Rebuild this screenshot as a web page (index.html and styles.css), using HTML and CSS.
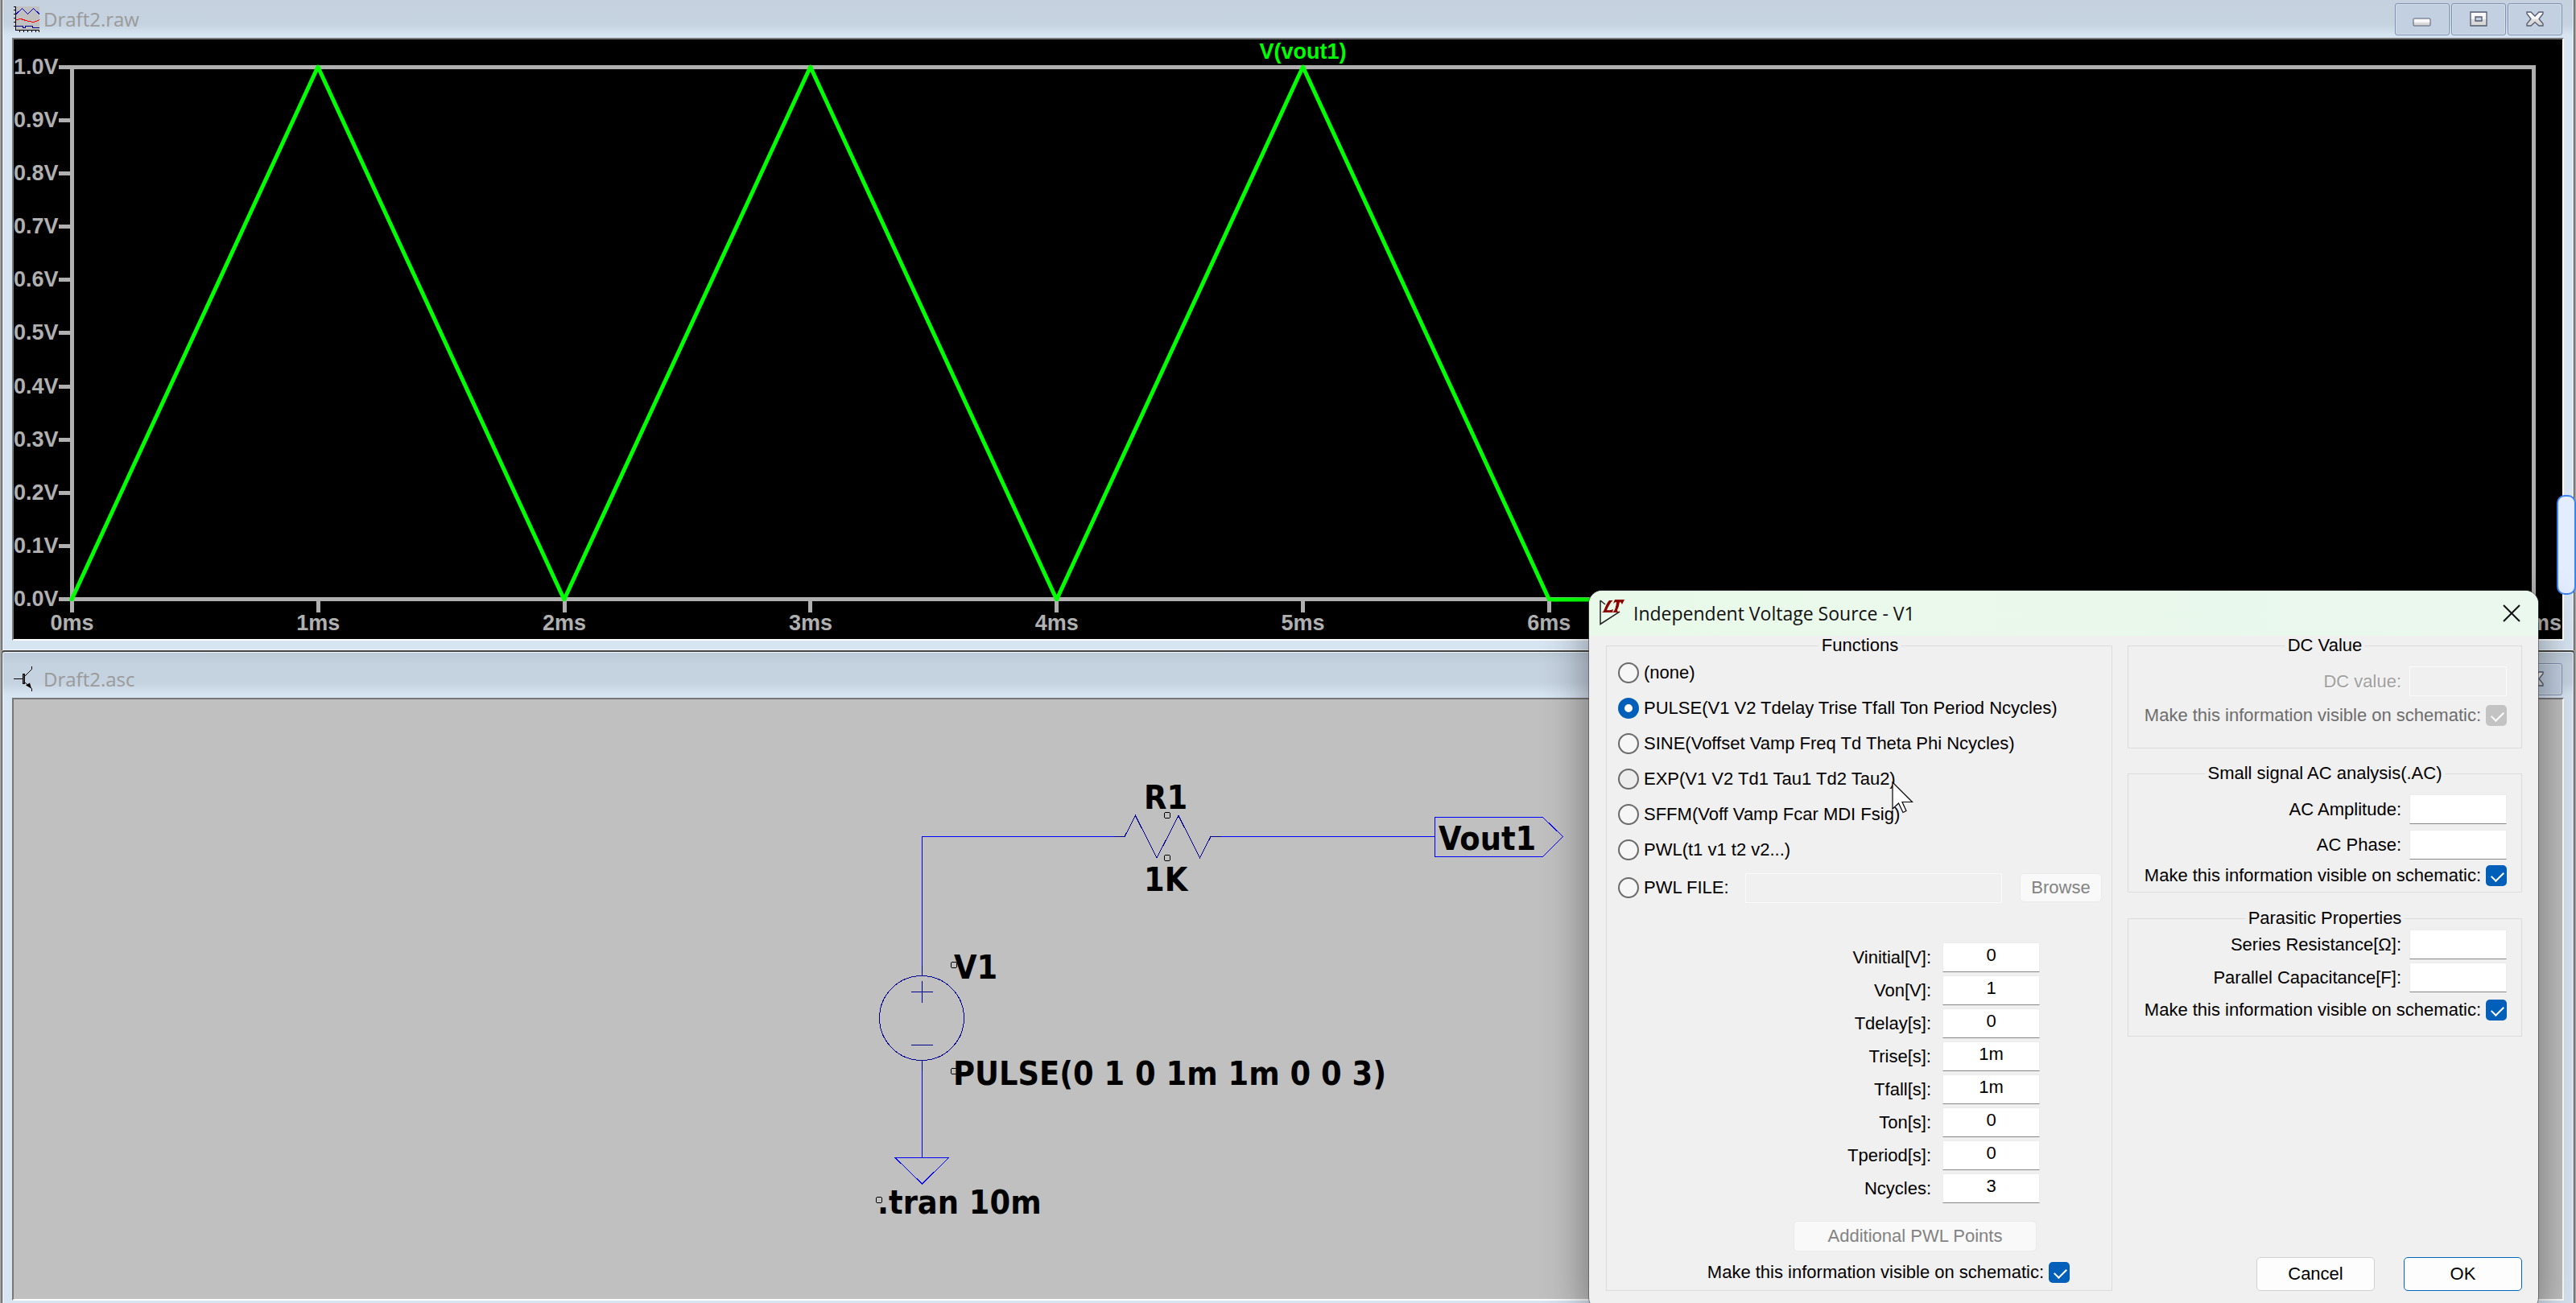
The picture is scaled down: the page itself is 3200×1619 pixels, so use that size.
FILE: index.html
```html
<!DOCTYPE html>
<html lang="en">
<head>
<meta charset="utf-8">
<title>LTspice - Draft2</title>
<link rel="stylesheet" href="styles.css">
</head>
<body>
<svg class="defs" aria-hidden="true">
  <defs>
    <linearGradient id="glyph" x1="0" y1="0" x2="0" y2="1">
      <stop offset="0" stop-color="#fff"/><stop offset=".5" stop-color="#f4f4f4"/><stop offset=".52" stop-color="#dcdcdc"/><stop offset="1" stop-color="#d6d6d6"/>
    </linearGradient>
  </defs>
</svg>

<main class="workspace">
  <section class="window">
    <header class="titlebar">
      <svg class="win-icon" viewBox="0 0 32 32" shape-rendering="crispEdges" aria-hidden="true">
        <rect x="3" width="29" height="29" fill="#c0c0c0"/>
        <path d="M2.5 0v30M2 29.5h30M0 .5h3M0 4.500h3M0 9.500h3M0 14.500h3M0 19.500h3M0 24.500h3M7.500 29v3M12.500 29v3M17.500 29v3M22.500 29v3M27.500 29v3M31.500 29v3" stroke="#000" fill="none"/>
        <path d="M3 9.500L10.500 2.500L17.500 9.500L24.500 2.500L32 9.500" stroke="#0000d0" fill="none"/>
        <path d="M3 16.500L9 15.500L15 17.500L24 19.500L28 18.500L32 16.500" stroke="#f00" fill="none"/>
        <path d="M3 24.500h8.500v2h3v-2h9v2h8.500" stroke="#000090" fill="none"/>
      </svg>
      <h1 class="win-title">Draft2.raw</h1>
      <div class="win-buttons">
        <button class="win-button" type="button" aria-label="Minimize"><svg width="24" height="20" viewBox="0 0 24 20"><rect x="1" y="9" width="21" height="9" rx="1" fill="url(#glyph)" stroke="#545a70"/></svg></button>
        <button class="win-button" type="button" aria-label="Maximize"><svg width="24" height="20" viewBox="0 0 24 20"><path d="M2 1h20v17h-20zM8 7h8v5h-8z" fill="url(#glyph)" fill-rule="evenodd" stroke="#545a70" stroke-width="1.300"/></svg></button>
        <button class="win-button" type="button" aria-label="Close"><svg width="24" height="20" viewBox="0 0 24 20"><path d="M2 1h5l5 5l5-5h5v2l-5 6.500l5 6v2.500h-5l-5-4.500l-5 4.500h-5v-2.500l5-6l-5-6.500z" fill="url(#glyph)" stroke="#545a70" stroke-width="1.300"/></svg></button>
      </div>
    </header>
    <div class="client waveform">
      <p class="trace-name">V(vout1)</p>
      <ol class="y-axis">
        <li>1.0V</li><li>0.9V</li><li>0.8V</li><li>0.7V</li><li>0.6V</li><li>0.5V</li><li>0.4V</li><li>0.3V</li><li>0.2V</li><li>0.1V</li><li>0.0V</li>
      </ol>
      <div class="plot-frame"></div>
      <svg class="trace" viewBox="0 0 1000 100" preserveAspectRatio="none" role="img" aria-label="V(vout1)">
        <polyline points="0,100 100,0 200,100 300,0 400,100 500,0 600,100 1000,100"/>
      </svg>
      <ol class="x-axis">
        <li>0ms</li><li>1ms</li><li>2ms</li><li>3ms</li><li>4ms</li><li>5ms</li><li>6ms</li><li></li><li></li><li></li><li>10ms</li>
      </ol>
    </div>
  </section>

  <section class="window window-lower">
    <header class="titlebar">
      <svg class="win-icon" viewBox="0 0 32 32" aria-hidden="true">
        <path d="M0 15.500h11M14 12L22.500 3.500V0M14 20L22.500 27.500V31" stroke="#000" fill="none"/>
        <rect x="11.500" y="9.500" width="2" height="12" fill="#555" stroke="#000"/>
        <path d="M15 23.500l5-3l2 7z" fill="#000"/>
      </svg>
      <h1 class="win-title">Draft2.asc</h1>
      <div class="win-buttons">
        <button class="win-button" type="button" aria-label="Minimize"><svg width="24" height="20" viewBox="0 0 24 20"><rect x="1" y="9" width="21" height="9" rx="1" fill="url(#glyph)" stroke="#545a70"/></svg></button>
        <button class="win-button" type="button" aria-label="Maximize"><svg width="24" height="20" viewBox="0 0 24 20"><path d="M2 1h20v17h-20zM8 7h8v5h-8z" fill="url(#glyph)" fill-rule="evenodd" stroke="#545a70" stroke-width="1.300"/></svg></button>
        <button class="win-button" type="button" aria-label="Close"><svg width="24" height="20" viewBox="0 0 24 20"><path d="M2 1h5l5 5l5-5h5v2l-5 6.500l5 6v2.500h-5l-5-4.500l-5 4.500h-5v-2.500l5-6l-5-6.500z" fill="url(#glyph)" stroke="#545a70" stroke-width="1.300"/></svg></button>
      </div>
    </header>
    <div class="client schematic">
      <svg class="sheet" role="img" aria-label="Schematic">
        <g class="wire">
          <path d="M1128.500 331V170.500H1367"/>
          <path d="M1500 170.500H1765.500"/>
          <path d="M1128.500 462V569.500"/>
          <path d="M1095 569.500H1161.500L1128.500 602Z"/>
          <path d="M1765.500 146.500H1899.500L1924.500 170.500L1899.500 195.500H1765.500Z"/>
        </g>
        <g class="part">
          <path d="M1367 170.500H1380L1393.500 144.500L1420 197L1447 144.500L1473.500 197L1487 170.500H1500"/>
          <circle cx="1128" cy="396" r="52.500"/>
          <path d="M1128.500 331V343M1128.500 449V462"/>
          <path d="M1115 363.500H1142M1128.500 350V377M1115 429.500H1142"/>
        </g>
        <g class="anchor">
          <circle cx="1433" cy="144" r="4"/><circle cx="1433" cy="197" r="4"/><circle cx="1168" cy="330" r="4"/><circle cx="1168" cy="462" r="4"/><circle cx="1075" cy="622" r="4"/>
        </g>
        <g class="net-text">
          <text x="1404" y="136">R1</text>
          <text x="1404" y="238">1K</text>
          <text x="1770" y="187">Vout1</text>
          <text x="1168" y="347">V1</text>
          <text x="1167" y="479">PULSE(0 1 0 1m 1m 0 0 3)</text>
          <text x="1073" y="639">.tran 10m</text>
        </g>
      </svg>
    </div>
  </section>
</main>

<div class="scroll-pill"></div>

<form class="dialog" role="dialog" aria-labelledby="dlg-title">
  <header class="dialog-bar">
    <svg class="dialog-icon" width="32" height="32" viewBox="0 0 32 32" aria-hidden="true">
      <path d="M1 1L7 6M1 1V30.500L25 15" stroke="#222" stroke-width="1.500" fill="none"/>
      <path d="M12 1H16.500C13 4 11 9 9 13Q13 14 17 12L16 16H3Q5 15 6 12Q9 4 12 1Z" fill="#8b0000"/>
      <path d="M19 0H31L28 6Q27 3 25 3Q24 9 22 13Q22 15 24 16H16Q19 14 20 9Q21 5 21 3Q19 3 17 5Z" fill="#8b0000"/>
    </svg>
    <h2 id="dlg-title" class="dialog-title">Independent Voltage Source - V1</h2>
    <button class="dialog-close" type="button" aria-label="Close"><svg width="22" height="22" viewBox="0 0 22 22"><path d="M1 1L21 21M21 1L1 21" stroke="#111" stroke-width="2" fill="none"/></svg></button>
  </header>
  <div class="dialog-body">
    <fieldset class="group functions">
      <legend>Functions</legend>
      <label class="choice"><input type="radio" name="fn">(none)</label>
      <label class="choice"><input type="radio" name="fn" checked>PULSE(V1 V2 Tdelay Trise Tfall Ton Period Ncycles)</label>
      <label class="choice"><input type="radio" name="fn">SINE(Voffset Vamp Freq Td Theta Phi Ncycles)</label>
      <label class="choice"><input type="radio" name="fn" class="hovered">EXP(V1 V2 Td1 Tau1 Td2 Tau2)</label>
      <label class="choice"><input type="radio" name="fn">SFFM(Voff Vamp Fcar MDI Fsig)</label>
      <label class="choice"><input type="radio" name="fn">PWL(t1 v1 t2 v2...)</label>
      <div class="file-row">
        <label class="choice"><input type="radio" name="fn">PWL FILE:</label>
        <input class="file-name" type="text" aria-label="PWL file name" disabled>
        <button class="button browse" type="button" disabled>Browse</button>
      </div>
      <div class="params">
        <label for="p1">Vinitial[V]:</label><input class="field" id="p1" type="text" value="0">
        <label for="p2">Von[V]:</label><input class="field" id="p2" type="text" value="1">
        <label for="p3">Tdelay[s]:</label><input class="field" id="p3" type="text" value="0">
        <label for="p4">Trise[s]:</label><input class="field" id="p4" type="text" value="1m">
        <label for="p5">Tfall[s]:</label><input class="field" id="p5" type="text" value="1m">
        <label for="p6">Ton[s]:</label><input class="field" id="p6" type="text" value="0">
        <label for="p7">Tperiod[s]:</label><input class="field" id="p7" type="text" value="0">
        <label for="p8">Ncycles:</label><input class="field" id="p8" type="text" value="3">
      </div>
      <button class="button points" type="button" disabled>Additional PWL Points</button>
      <label class="visible-row">Make this information visible on schematic:<input type="checkbox" checked></label>
    </fieldset>

    <div class="side">
      <fieldset class="group dc">
        <legend>DC Value</legend>
        <div class="row"><label class="ghost" for="dc">DC value:</label><input class="field" id="dc" type="text" disabled></div>
        <label class="visible-row off">Make this information visible on schematic:<input type="checkbox" checked disabled></label>
      </fieldset>
      <fieldset class="group ac">
        <legend>Small signal AC analysis(.AC)</legend>
        <div class="row"><label for="aca">AC Amplitude:</label><input class="field" id="aca" type="text"></div>
        <div class="row"><label for="acp">AC Phase:</label><input class="field" id="acp" type="text"></div>
        <label class="visible-row">Make this information visible on schematic:<input type="checkbox" checked></label>
      </fieldset>
      <fieldset class="group parasitic">
        <legend>Parasitic Properties</legend>
        <div class="row"><label for="rs">Series Resistance[Ω]:</label><input class="field" id="rs" type="text"></div>
        <div class="row"><label for="cp">Parallel Capacitance[F]:</label><input class="field" id="cp" type="text"></div>
        <label class="visible-row">Make this information visible on schematic:<input type="checkbox" checked></label>
      </fieldset>
      <div class="actions">
        <button class="button" type="button">Cancel</button>
        <button class="button primary" type="submit">OK</button>
      </div>
    </div>
  </div>
  <svg class="pointer" width="28" height="40" viewBox="0 0 28 40" aria-hidden="true"><path d="M1 1V34L8.500 27L14 38.500L18 36.500L13 25.500H25.500Z" fill="#fff" stroke="#000" stroke-width="1.200"/></svg>
</form>
</body>
</html>
```

FILE: styles.css
```css
* { box-sizing: border-box; }

body {
  margin: 0;
  height: 100vh;
  overflow: hidden;
  position: relative;
  background: #a0a0a0;
  font: 22px/26px "Liberation Sans", Arial, sans-serif;
  color: #000;
}

h1, h2, p, ol { margin: 0; padding: 0; }
ol { list-style: none; }
button, input { font: inherit; color: inherit; margin: 0; }
.defs { position: absolute; width: 0; height: 0; }

/* MDI child windows */
.workspace {
  display: grid;
  grid-template-rows: 808fr 811fr;
  height: 100%;
  padding: 0 2px;
}

.window {
  display: flex;
  flex-direction: column;
  min-height: 0;
  padding: 0 12px 12px;
  border: solid #444;
  border-width: 0 1px;
  box-shadow: inset 1px 0 #f4f8fc, inset -1px 0 #f4f8fc, inset 0 -1px #f4f8fc;
  background: #d7e4f2 linear-gradient(#c5d1de, #c5d2e0 30px, #d7e4f2 44px) no-repeat 0 0 / 100% 47px;
}

.window-lower {
  padding-bottom: 3px;
  border-top-width: 2px;
  border-radius: 4px 4px 0 0;
  box-shadow: inset 0 1px #f4f8fc, inset 1px 0 #f4f8fc, inset -1px 0 #f4f8fc;
  background: #d7e4f2 linear-gradient(#bccad9, #c5d2e0 16px, #c5d2e0 38px, #d7e4f2 54px) no-repeat 0 0 / 100% 57px;
}

.titlebar {
  display: flex;
  align-items: flex-start;
  gap: 5px;
  padding: 4px 2px 3px;
  height: 47px;
  flex: none;
}

.window-lower .titlebar { padding-top: 14px; height: 57px; }
.win-icon { width: 32px; height: 32px; margin-top: 4px; }
.win-title { flex: 1; font: 24px/40px "Open Sans", "Noto Sans", sans-serif; color: #9a9a9a; }
.win-buttons { display: flex; gap: 2px; }

.win-button {
  display: grid;
  place-items: center;
  width: 68px;
  height: 40px;
  padding: 0;
  border: 1px solid #8291ae;
  border-radius: 3px;
  box-shadow: inset 0 0 0 1px #d3deeb;
  background: #c2d0e1;
}

.client {
  flex: 1;
  min-height: 0;
  border: 2px solid;
  border-color: #777 #fff #fff #777;
}

/* Waveform viewer */
.waveform {
  display: grid;
  grid-template-columns: 70px 1fr 33px;
  grid-template-rows: 32px 1fr 47px;
  background: #000;
  color: #b0b0b0;
  font-size: 27px;
  line-height: 27px;
  font-weight: bold;
  overflow: hidden;
}

.trace-name { grid-area: 1 / 2; text-align: center; color: #0f0; padding-top: 2px; }

.y-axis {
  grid-area: 2 / 1;
  display: flex;
  flex-direction: column;
  justify-content: space-between;
  margin: -11px 0;
}

.y-axis li { display: flex; align-items: center; justify-content: space-between; }
.y-axis li::after { content: ""; width: 16px; height: 5px; background: #b0b0b0; }
.plot-frame { grid-area: 2 / 2; border: 5px solid #b0b0b0; }

.trace {
  grid-area: 2 / 2;
  width: calc(100% - 4px);
  height: calc(100% - 4px);
  margin: 2px;
  overflow: visible;
}

.trace polyline {
  fill: none;
  stroke: #0f0;
  stroke-width: 5px;
  stroke-linejoin: round;
  stroke-linecap: round;
  vector-effect: non-scaling-stroke;
}

.x-axis { grid-area: 3 / 2; display: flex; justify-content: space-between; }
.x-axis li { display: flex; flex-direction: column; align-items: center; width: 5px; }
.x-axis li::before { content: ""; width: 5px; height: 14px; background: #b0b0b0; flex: none; }

/* Schematic editor */
.schematic { background: #c0c0c0; }
.sheet { display: block; width: 100%; height: 100%; shape-rendering: crispEdges; }
.wire { fill: none; stroke: #0000ff; }
.part { fill: none; stroke: #000090; }
.anchor { fill: none; stroke: #000; }
.net-text { font: bold 41px "DejaVu Sans Condensed", "DejaVu Sans", sans-serif; fill: #000; }

/* Scroll handle at the right edge */
.scroll-pill {
  position: absolute;
  right: 0;
  top: 615px;
  width: 24px;
  height: 124px;
  border: 2px solid #3b82f6;
  border-radius: 10px;
  background: #e4edff;
}

/* Source dialog */
.dialog {
  position: absolute;
  top: 734px;
  right: 47px;
  width: 1179px;
  border-radius: 16px;
  background: #f0f0f0;
  box-shadow: 0 0 0 1px rgba(70, 70, 70, .6), 0 16px 56px rgba(0, 0, 0, .45);
}

.dialog-bar {
  display: flex;
  align-items: center;
  height: 56px;
  padding: 0 22px 0 13px;
  gap: 10px;
  border-radius: 16px 16px 0 0;
  background: linear-gradient(90deg, #e9f9e9, #eaf8ee);
}

.dialog-icon { margin-bottom: 2px; }
.dialog-title { flex: 1; font: 23px/32px "Open Sans", "Noto Sans", sans-serif; color: #111; }
.dialog-close { display: grid; padding: 0; border: 0; background: none; }

.dialog-body {
  display: grid;
  grid-template-columns: 629px 490px;
  gap: 19px;
  padding: 0 20px 24px 21px;
}

.group {
  margin: 0;
  min-width: 0;
  border: 1px solid #dcdcdc;
  padding: 0 18px;
}

.group legend { margin: 0 auto; padding: 0 4px; height: 24px; line-height: 24px; text-align: center; }
.functions { display: flex; flex-direction: column; padding: 0 12px 0 14px; }
.choice { display: flex; align-items: center; gap: 6px; height: 44px; white-space: nowrap; }

input[type="radio"] {
  appearance: none;
  width: 26px;
  height: 26px;
  border: 2px solid #6a6a6a;
  border-radius: 50%;
  background: #f6f6f6;
}

input[type="radio"].hovered { background: #ececec; }
input[type="radio"]:checked { border: 8px solid #005fb8; background: #fff; }

.file-row { display: flex; align-items: center; height: 50px; }
.file-row .choice { width: 158px; }

.file-name, .field:disabled {
  border: 1px solid #fafafa;
  background: #f0f0f0;
}

.file-name { width: 319px; height: 37px; margin-right: auto; }

.params {
  display: grid;
  grid-template-columns: 1fr 121px;
  gap: 4px 14px;
  align-items: center;
  padding: 43px 77px 0 0;
  text-align: right;
}

.field {
  width: 121px;
  height: 37px;
  padding: 0 4px 5px;
  text-align: center;
  border: 1px solid #ececec;
  border-bottom-color: #868686;
  background: #fff;
}

.field:disabled { border-color: #fafafa; }

.button {
  height: 42px;
  padding: 0;
  border: 1px solid #d0d0d0;
  border-radius: 5px;
  background: #fdfdfd;
}

.button:disabled { border-color: #eaeaea; background: #f9f9f9; color: #838383; }
.browse { width: 102px; height: 36px; }
.points { width: 302px; height: 38px; margin: 22px 81px 0 auto; }

.visible-row { display: flex; align-items: center; justify-content: flex-end; gap: 6px; height: 26px; white-space: nowrap; }
.visible-row.off { color: #6d6d6d; }
.functions .visible-row { margin: 13px 40px 9px 0; }

input[type="checkbox"] {
  appearance: none;
  width: 26px;
  height: 26px;
  border-radius: 5px;
  background: #005fb8;
}

input[type="checkbox"]:disabled { background: #c3c3c3; }

input[type="checkbox"]::before {
  content: "";
  display: block;
  width: 13px;
  height: 7px;
  margin: 8px 0 0 7px;
  border: solid #fff;
  border-width: 0 0 2px 2px;
  transform: rotate(-45deg);
}

.side { display: flex; flex-direction: column; }
.row { display: flex; align-items: center; justify-content: flex-end; gap: 10px; }
.ghost { color: #a0a0a0; text-shadow: 1px 1px #fff; }
.dc { padding-bottom: 27px; }
.dc legend { margin-bottom: 14px; }
.dc .row { margin-bottom: 11px; }
.ac { margin-top: 19px; padding-bottom: 7px; }
.ac legend { margin-bottom: 14px; }
.ac .row { margin-bottom: 7px; }
.parasitic { margin-top: 20px; padding-bottom: 19px; }
.parasitic legend { margin-bottom: 2px; }
.parasitic .row { margin-bottom: 4px; }
.parasitic .visible-row { margin-top: 9px; }

.actions { display: flex; justify-content: flex-end; gap: 36px; margin-top: auto; }
.actions .button { width: 147px; }
.button.primary { border-color: #0067c0; }

.pointer { position: absolute; left: 376px; top: 237px; }
```
